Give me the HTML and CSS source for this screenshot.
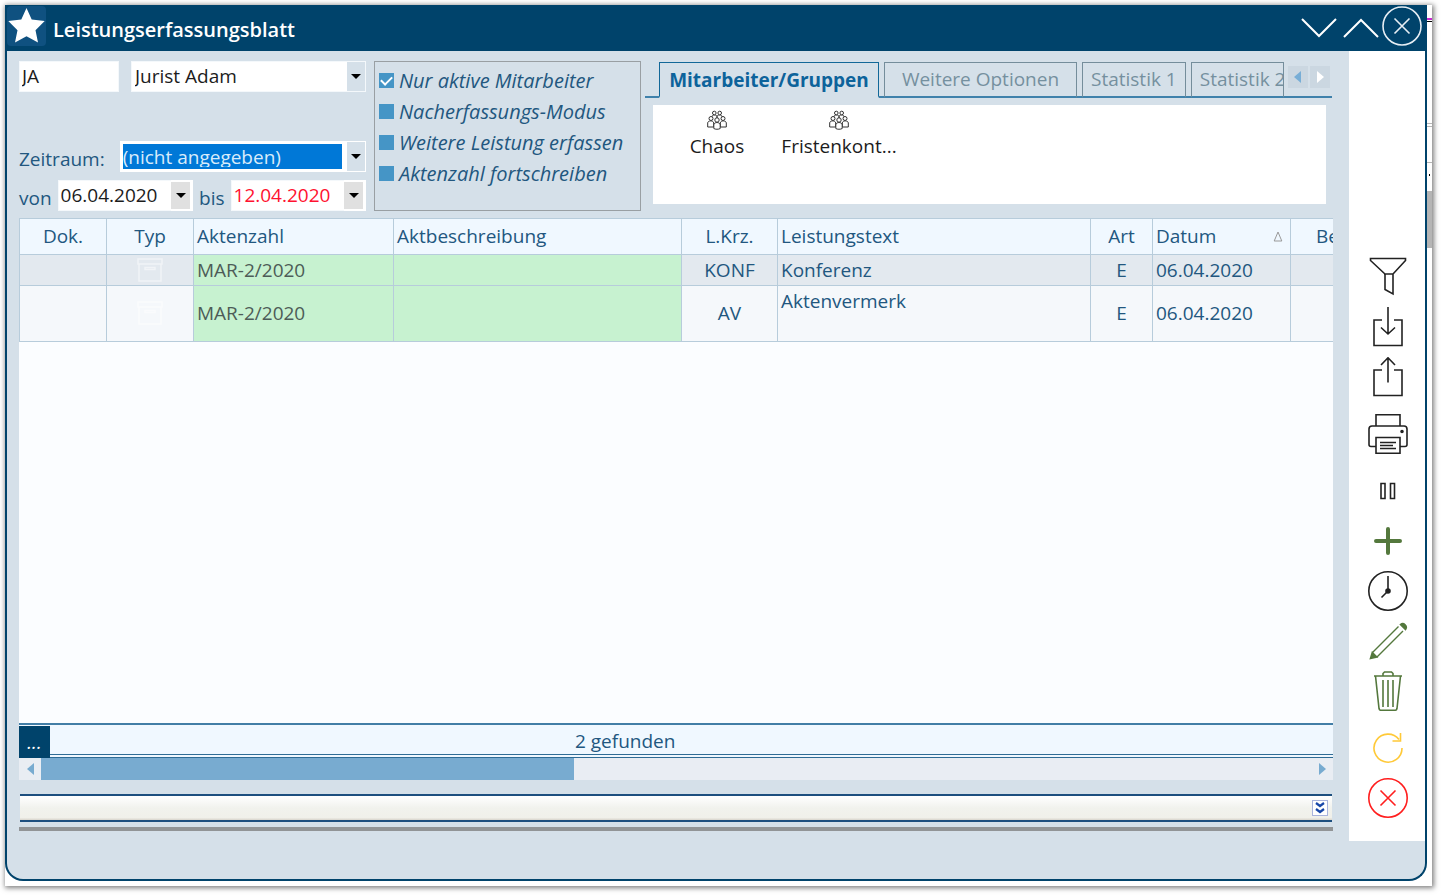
FILE: index.html
```html
<!DOCTYPE html>
<html lang="de">
<head>
<meta charset="utf-8">
<title>Leistungserfassungsblatt</title>
<link rel="stylesheet" href="styles.css">
</head>
<body>
<div class="desktop">
  <section class="window">
    <header class="titlebar">
      <svg class="app-icon" viewBox="0 0 40 40" aria-hidden="true"><rect x="0" y="0" width="39" height="40" rx="4" fill="#0f5180"/><path d="M19.500 2l5.200 11.500 13 1.500-9.200 9.200 2.500 12.300-11.500-6.200-11.500 6.200 2.500-12.300L1.300 15l13-1.500z" fill="#fff"/></svg>
      <h1 class="title">Leistungserfassungsblatt</h1>
      <button class="win-btn" aria-label="Minimieren"><svg width="36" height="20" viewBox="0 0 36 20"><path d="M1 1l17 17L35 1" fill="none" stroke="#fff" stroke-width="2"/></svg></button>
      <button class="win-btn" aria-label="Maximieren"><svg width="36" height="20" viewBox="0 0 36 20"><path d="M1 19L18 2l17 17" fill="none" stroke="#fff" stroke-width="2"/></svg></button>
      <button class="win-btn win-close" aria-label="Schließen"><svg width="40" height="40" viewBox="0 0 40 40"><g fill="none" stroke="#e6eef4" stroke-width="1.600"><circle cx="20" cy="20" r="19"/><path d="M12.500 12.500l15 15M27.500 12.500l-15 15"/></g></svg></button>
    </header>
    <div class="content">
      <main class="main">
        <div class="top">
          <form class="filters">
            <div class="row row-person">
              <input class="field code" type="text" value="JA" aria-label="Kürzel">
              <div class="combo"><select class="field" aria-label="Mitarbeiter"><option>Jurist Adam</option></select><span class="combo-arrow"></span></div>
            </div>
            <div class="row row-period">
              <label class="label" for="period">Zeitraum:</label>
              <div class="combo"><select class="field selected" id="period"><option>(nicht angegeben)</option></select><span class="combo-arrow"></span></div>
            </div>
            <div class="row row-dates">
              <label class="label" for="from">von</label>
              <div class="date"><input class="field" id="from" type="text" value="06.04.2020"><button class="date-btn" type="button" aria-label="Kalender von"></button></div>
              <label class="label" for="to">bis</label>
              <div class="date"><input class="field late" id="to" type="text" value="12.04.2020"><button class="date-btn" type="button" aria-label="Kalender bis"></button></div>
            </div>
          </form>
          <fieldset class="options">
            <label class="option"><input class="check" type="checkbox" checked>Nur aktive Mitarbeiter</label>
            <label class="option"><input class="check" type="checkbox">Nacherfassungs-Modus</label>
            <label class="option"><input class="check" type="checkbox">Weitere Leistung erfassen</label>
            <label class="option"><input class="check" type="checkbox">Aktenzahl fortschreiben</label>
          </fieldset>
          <div class="tabs">
            <div class="tab-strip" role="tablist">
              <button class="tab active" role="tab" aria-selected="true">Mitarbeiter/Gruppen</button>
              <button class="tab tab-wide" role="tab">Weitere Optionen</button>
              <button class="tab" role="tab">Statistik 1</button>
              <button class="tab tab-cut" role="tab">Statistik 2</button>
              <div class="tab-nav">
                <button class="nav-btn" aria-label="Zurück"><svg width="8" height="12" viewBox="0 0 8 12"><path d="M7 0v12L0 6z" fill="#78aed6"/></svg></button>
                <button class="nav-btn" aria-label="Weiter"><svg width="8" height="12" viewBox="0 0 8 12"><path d="M1 0v12l7-6z" fill="#fff"/></svg></button>
              </div>
            </div>
            <div class="groups">
              <div class="group"><svg class="group-icon" viewBox="0 0 20 20"><use href="#people"/></svg><span>Chaos</span></div>
              <div class="group"><svg class="group-icon" viewBox="0 0 20 20"><use href="#people"/></svg><span>Fristenkont...</span></div>
            </div>
          </div>
        </div>
        <div class="grid">
          <table class="table">
            <colgroup><col class="c-dok"><col class="c-dok"><col class="c-az"><col class="c-desc"><col class="c-krz"><col class="c-text"><col class="c-art"><col class="c-date"><col class="c-last"></colgroup>
            <thead>
              <tr><th class="mid">Dok.</th><th class="mid">Typ</th><th>Aktenzahl</th><th>Aktbeschreibung</th><th class="mid">L.Krz.</th><th>Leistungstext</th><th class="mid">Art</th><th><div class="sorted">Datum<svg width="10" height="11" viewBox="0 0 10 11"><path d="M5 1l3.800 9H1.200z" fill="none" stroke="#999"/></svg></div></th><th class="mid">Be</th></tr>
            </thead>
            <tbody>
              <tr class="current"><td></td><td class="mid"><svg class="box" viewBox="0 0 26 24"><use href="#archive"/></svg></td><td class="file">MAR-2/2020</td><td class="file"></td><td class="mid">KONF</td><td>Konferenz</td><td class="mid">E</td><td>06.04.2020</td><td></td></tr>
              <tr class="tall"><td></td><td class="mid"><svg class="box" viewBox="0 0 26 24"><use href="#archive"/></svg></td><td class="file">MAR-2/2020</td><td class="file"></td><td class="mid">AV</td><td class="upper">Aktenvermerk</td><td class="mid">E</td><td>06.04.2020</td><td></td></tr>
            </tbody>
          </table>
        </div>
        <div class="status"><button class="more">...</button><div class="count">2 gefunden</div></div>
        <div class="scroll">
          <button class="scroll-btn" aria-label="Nach links"><svg width="7" height="12" viewBox="0 0 7 12"><path d="M7 0v12L0 6z" fill="#78abd0"/></svg></button>
          <div class="track"><div class="thumb"></div></div>
          <button class="scroll-btn" aria-label="Nach rechts"><svg width="7" height="12" viewBox="0 0 7 12"><path d="M0 0v12l7-6z" fill="#78abd0"/></svg></button>
        </div>
        <div class="drawer"><button class="expand" aria-label="Aufklappen"><svg width="10" height="12" viewBox="0 0 10 12"><path d="M1 1l4 3 4-3M1 7l4 3 4-3" fill="none" stroke="#1747a8" stroke-width="2.200"/></svg></button></div>
        <div class="rule"></div>
      </main>
      <aside class="tools">
        <div class="tool-group">
          <button class="tool" aria-label="Filter"><svg viewBox="0 0 40 40"><path d="M2.500 1.500h35v2L25 17v20l-8-4.500V17L2.500 3.500zM16 17h9"/></svg></button>
          <button class="tool" aria-label="Importieren"><svg viewBox="0 0 40 40"><path d="M14 13H6v25.500h28V13h-8M20 0v27M13 20.500l7 6.500 7-6.500"/></svg></button>
          <button class="tool" aria-label="Exportieren"><svg viewBox="0 0 40 40"><path d="M14 13H6v25.500h28V13h-8M20 25.500V.8M13 8l7-7.200L27 8"/></svg></button>
        </div>
        <div class="tool-group">
          <button class="tool" aria-label="Drucken"><svg viewBox="0 0 40 40"><path d="M8 12V.8h24V12M8 32.500H3a2 2 0 0 1-2-2V15a3 3 0 0 1 3-3h32a3 3 0 0 1 3 3v15.500a2 2 0 0 1-2 2h-5M8 23.500h24v15.700H8zM12 28.500h16M12 31.500h13M12 34.500h16"/><circle cx="34" cy="17.500" r="1" fill="#222"/></svg></button>
        </div>
        <div class="tool-group">
          <button class="tool" aria-label="Pause"><svg viewBox="0 0 40 40"><path d="M13 12.500h4v15h-4zM22.500 12.500h4v15h-4z"/></svg></button>
          <button class="tool green" aria-label="Neu"><svg viewBox="0 0 40 40"><path d="M20 8v24M8 20h24" stroke-width="4" stroke-linecap="round"/></svg></button>
          <button class="tool" aria-label="Zeit"><svg viewBox="0 0 40 40"><circle cx="20" cy="20" r="19.200"/><path d="M20 5v15l-6.500 6.500"/><circle cx="20" cy="20" r="2" fill="#222"/></svg></button>
          <button class="tool green" aria-label="Bearbeiten"><svg viewBox="0 0 40 40"><path d="M4.500 31.500L30.500 5.500M9 36L35 10" stroke-width="1.400"/><path d="M2.500 37.500l1.800-6 4.500 4.500zM32.500 3.500c3-2.500 7.500 1.500 5 5z" fill="#54783d"/></svg></button>
          <button class="tool green" aria-label="Löschen"><svg viewBox="0 0 40 40"><path d="M6 5h28M15 4.500V2.500l1.500-1.500h7L25 2.500v2M7.500 5l3.500 32.500c.2 1 .7 1.700 1.500 1.700h15c.8 0 1.300-.7 1.500-1.700L32.500 5M15 9v27M20 9v27M25 9v27"/></svg></button>
        </div>
        <div class="tool-group">
          <button class="tool yellow" aria-label="Aktualisieren"><svg viewBox="0 0 40 40"><path d="M34 20A14 14 0 1 1 31 11.500M32.500 5v8h-8"/></svg></button>
          <button class="tool red" aria-label="Abbrechen"><svg viewBox="0 0 40 40"><circle cx="20" cy="20" r="19.200"/><path d="M12.500 12.500l15 15M27.500 12.500l-15 15"/></svg></button>
        </div>
      </aside>
    </div>
  </section>
  <div class="edge" aria-hidden="true"><svg width="5" height="881" viewBox="0 0 5 881"><path d="M0 13h5v2H0z" fill="#c92bd1"/><path d="M0 16h5v1H0zM2 169h1v2H2z" fill="#000"/><path d="M0 118h5v1H0zM0 121h5v1H0zM0 157h5v1H0zM0 186h5v57H0z" fill="#b5b5b5"/></svg></div>
</div>
<svg class="defs" aria-hidden="true">
  <symbol id="people" viewBox="0 0 20 20"><g fill="#fff" stroke="#333"><path d="M5 10V6.500c0-2 5-2 5 0V10M10 10V6.500c0-2 5-2 5 0V10"/><circle cx="7.300" cy="3" r="1.800"/><circle cx="12.700" cy="3" r="1.800"/><path d="M.7 17v-4c0-2.800 6-2.800 6 0v4zM13.300 17v-4c0-2.800 6-2.800 6 0v4z"/><circle cx="4" cy="8.500" r="2"/><circle cx="16" cy="8.500" r="2"/><path d="M6.800 18.500V15c0-3.300 6.400-3.300 6.400 0v3.500c-1.500 1-5 1-6.400 0z"/><circle cx="10" cy="10" r="2.200"/></g></symbol>
  <symbol id="archive" viewBox="0 0 26 24"><path d="M1 1h24v5H1zM2 6v17h22V6M8 9.500h10v2H8z" fill="none" stroke="#fff" stroke-width="1.500"/></symbol>
</svg>
</body>
</html>
```

FILE: styles.css
```css
* { box-sizing: border-box; }

body {
  margin: 0;
  padding: 5px 9px 9px 5px;
  height: 100vh;
  background: #fff;
  color: #22577f;
  font: 19px/26px "Open Sans", "Noto Sans", sans-serif;
  overflow: hidden;
}

button, input, select { font: inherit; color: inherit; margin: 0; padding: 0; border: 0; border-radius: 0; }
button { background: none; }
svg { display: block; }
.defs { width: 0; height: 0; }

.desktop {
  display: flex;
  height: 100%;
  background: #fff;
  box-shadow: 1px 1px 5px 1px rgba(0, 0, 0, .5);
}
.edge { width: 5px; overflow: hidden; }

.window {
  flex: 1;
  min-width: 0;
  margin-bottom: 5px;
  display: flex;
  flex-direction: column;
  background: #d5e0e9;
  border: 2px solid #00436b;
  border-top: 0;
  border-radius: 0 0 18px 18px;
  overflow: hidden;
}

.titlebar {
  display: flex;
  align-items: center;
  height: 46px;
  padding-right: 3px;
  background: #00436b;
  color: #fff;
}
.app-icon { width: 40px; height: 40px; margin-bottom: 4px; }
.title { flex: 1; margin: 4px 0 0 6px; font-size: 20px; line-height: 26px; font-weight: 600; }
.win-btn { width: 36px; margin-left: 6px; }
.win-close { width: 40px; margin-left: 3px; margin-bottom: 4px; }

.content { flex: 1; min-height: 0; display: flex; }
.main { flex: 1; min-width: 0; display: flex; flex-direction: column; padding: 10px 16px 48px 12px; }

.top { display: flex; height: 157px; }
.filters { width: 347px; }
.row { display: flex; align-items: center; height: 31px; }
.row-person { gap: 12px; }
.row-period { margin-top: 49px; gap: 15px; }
.row-dates { margin-top: 8px; gap: 6px; }
.label { padding-top: 5px; }
.field { width: 100%; min-width: 0; height: 31px; padding: 0 3px 2px; background: #fff; border: 1px solid #f4f8fb; color: #1c1c1c; }
.code { width: 100px; padding: 0 2px 2px; }
.combo { flex: 1; display: grid; }
.combo > * { grid-area: 1 / 1; }
.combo select { appearance: none; padding-right: 20px; }
.combo-arrow, .date-btn { display: grid; place-items: center; }
.combo-arrow { justify-self: end; width: 18px; margin: 1px; background: #d5e0e9; pointer-events: none; }
.combo-arrow::after, .date-btn::after { content: ""; border: 5px solid transparent; border-top-color: #000; border-bottom: 0; }
.combo .selected {
  padding: 0 0 2px 0;
  color: #d9ecfb;
  border: 3px solid #fff;
  border-right-width: 24px;
  background: linear-gradient(#0078d7, #0078d7) padding-box, #fff;
  box-shadow: none;
}
.date { flex: 1; display: flex; background: #fff; }
.date .field { flex: 1; padding: 0 2px 2px; border-right: 0; }
.date-btn { width: 19px; margin: 2px 3px 2px 0; background: #e0e0e0; }
.date .late { color: #ff1230; }

.options {
  width: 267px;
  height: 150px;
  margin: 0 0 0 8px;
  padding: 3px 4px;
  border: 1px solid #999fa3;
  font-size: 20px;
  font-style: italic;
}
.option { display: flex; align-items: center; gap: 5px; height: 31px; white-space: nowrap; }
.check { appearance: none; display: grid; place-items: center; width: 15px; height: 15px; background: #4595c6; }
.check:checked::after { content: ""; width: 9px; height: 5px; border: solid #fff; border-width: 0 0 2px 2px; transform: rotate(-45deg); margin-bottom: 3px; }

.tabs { flex: 1; min-width: 0; margin-left: 4px; }
.tab-strip {
  display: flex;
  align-items: flex-end;
  height: 37px;
  margin-right: 1px;
  padding: 1px 1px 0 0;
  background: linear-gradient(#3f81ab, #3f81ab) 234px 100% / 100% 2px no-repeat;
}
.tab-strip::before { content: ""; width: 14px; height: 2px; background: #3f81ab; }
.tab { height: 36px; margin-right: 5px; padding: 0 8px 2px; border: 1px solid #748d9b; border-bottom: 2px solid #3f81ab; color: #75909f; white-space: nowrap; }
.tab.active { width: 220px; border-color: #126898; border-bottom-color: transparent; color: #0d639b; font-weight: 700; padding: 0; }
.tab-wide { width: 193px; }
.tab-cut { width: 93px; margin-right: 4px; overflow: hidden; text-align: left; }
.tab-nav { display: flex; gap: 2px; align-self: flex-start; margin-top: 4px; }
.nav-btn { display: grid; place-items: center; width: 20px; height: 22px; background: #cbd7e1; }

.groups { display: flex; height: 99px; margin: 7px 7px 0 8px; padding: 5px 3px; background: #fff; color: #1c1c1c; }
.group { width: 122px; display: flex; flex-direction: column; align-items: center; gap: 3px; }
.group-icon { width: 20px; height: 20px; }

.grid { flex: 1; min-height: 0; overflow: hidden; background: #fbfdff; }
.table { width: 1345px; table-layout: fixed; border-collapse: collapse; }
.c-dok { width: 87px; }
.c-az { width: 200px; }
.c-desc { width: 288px; }
.c-krz { width: 96px; }
.c-text { width: 313px; }
.c-art { width: 62px; }
.c-date { width: 138px; }
.c-last { width: 74px; }
.table th, .table td { height: 31px; padding: 0 3px 1px; border: 1px solid #b7ccdb; text-align: left; font-weight: 400; background: #f5f8fb; line-height: 26px; }
.table th { height: 36px; background: #f0f8ff; }
.table .current td { background: #e3e9ef; }
.table .tall td { height: 56px; }
.table .upper { vertical-align: top; padding-top: 2px; }
.table .mid { text-align: center; }
.table .file, .table .current .file { background: #c7f2d0; color: #4d5c57; }
.sorted { display: flex; justify-content: space-between; align-items: center; padding-right: 4px; }
.box { width: 26px; height: 24px; margin: 0 auto; opacity: .5; }

.status { display: flex; height: 35px; border-top: 2px solid #427ea6; background: #f0f8ff; }
.more { width: 31px; margin-top: 1px; background: #00436b; color: #fff; font-style: italic; }
.count { flex: 1; padding: 3px 0 0 525px; border-bottom: 4px double #2f6c95; }

.scroll { display: flex; height: 22px; background: #e9edf3; }
.scroll-btn { display: grid; place-items: center; width: 22px; }
.track { flex: 1; display: flex; }
.thumb { width: 42%; background: #78abd0; }

.drawer {
  display: flex;
  align-items: center;
  justify-content: flex-end;
  height: 28px;
  margin: 14px 1px 0;
  padding-right: 4px;
  border: solid #1d4f7f;
  border-width: 2px 0;
  background: linear-gradient(#fff, #f1f2ed 50%, #f0f0ea 90%, #d8d4cc);
}
.expand { display: grid; place-items: center; width: 16px; height: 16px; border: 1px solid #a9b4dd; background: #fff; }
.rule { height: 4px; margin-top: 5px; background: #919496; }

.tools {
  width: 76px;
  margin-bottom: 38px;
  padding: 0 0 23px 2px;
  display: flex;
  flex-direction: column;
  justify-content: flex-end;
  align-items: center;
  gap: 17px;
  background: #fff;
}
.tool-group { display: flex; flex-direction: column; gap: 10px; }
.tool { width: 40px; height: 40px; }
.tool svg { width: 40px; height: 40px; fill: none; stroke: #222; stroke-width: 1.600; }
.tool.green svg { stroke: #54783d; }
.tool.yellow svg { stroke: #ffc938; }
.tool.red svg { stroke: #ff1f1f; }
```
